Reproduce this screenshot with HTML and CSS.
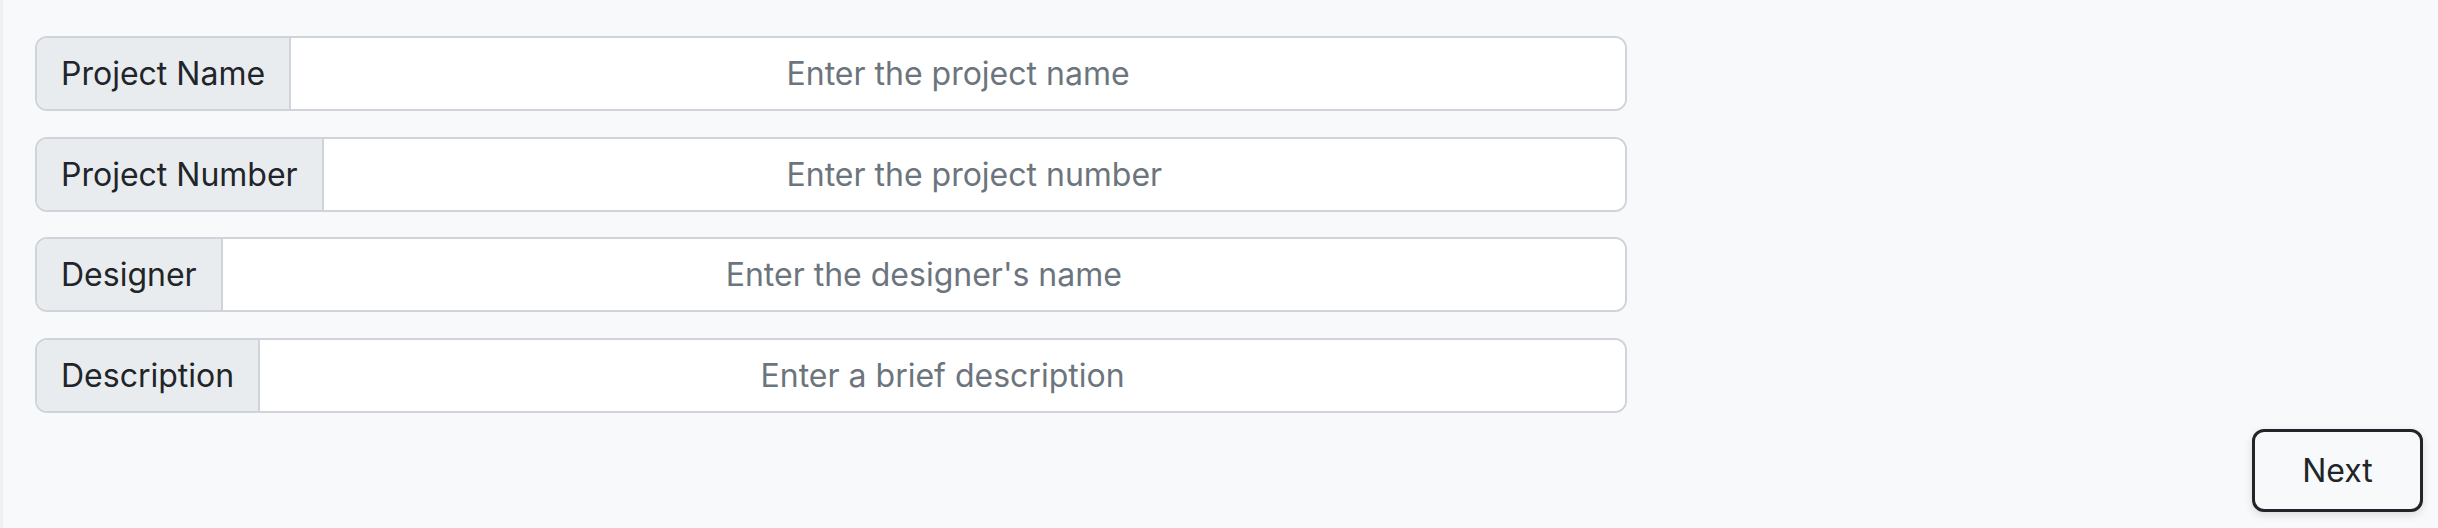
FILE: index.html
```html
<!DOCTYPE html>
<html lang="en">
<head>
<meta charset="utf-8">
<title>Project Details</title>
<link rel="stylesheet" href="styles.css">
</head>
<body>
<div class="page">
  <div class="edge"></div>
  <main class="content">
    <form class="form">
      <div class="input-group">
        <span class="label">Project Name</span>
        <input class="field" type="text" placeholder="Enter the project name">
      </div>
      <div class="input-group">
        <span class="label">Project Number</span>
        <input class="field" type="text" placeholder="Enter the project number">
      </div>
      <div class="input-group">
        <span class="label">Designer</span>
        <input class="field" type="text" placeholder="Enter the designer's name">
      </div>
      <div class="input-group">
        <span class="label">Description</span>
        <input class="field" type="text" placeholder="Enter a brief description">
      </div>
    </form>
    <div class="actions">
      <button class="btn-next" type="button">Next</button>
    </div>
  </main>
</div>
</body>
</html>
```
FILE: styles.css
```css
* { box-sizing: border-box; }
html, body { margin: 0; padding: 0; }
body {
  background: #f8f9fa;
  font-family: Inter, "Noto Sans", sans-serif;
  color: #212529;
  width: 2438px;
  height: 528px;
  overflow: hidden;
}
.page {
  display: flex;
  height: 528px;
}
.edge {
  width: 3px;
  flex: none;
  background: #eff0f1;
}
.content {
  flex: 1;
  display: flex;
  flex-direction: column;
  padding: 36px 15px 16px 32px;
}
.form {
  display: flex;
  flex-direction: column;
  gap: 25.3px;
  width: 1592px;
}
.input-group {
  display: flex;
  height: 75.3px;
  border: 2px solid #d0d4da;
  border-radius: 12px;
  overflow: hidden;
  background: #fff;
}
.label {
  display: flex;
  align-items: center;
  padding: 0 24px;
  background: #e9ecef;
  border-right: 2px solid #d0d4da;
  font-size: 32px;
  color: #212529;
  white-space: nowrap;
}
.field {
  flex: 1;
  border: 0;
  outline: 0;
  background: #fff;
  font-family: inherit;
  font-size: 32px;
  text-align: center;
  color: #212529;
  padding: 0 24px;
}
.field::placeholder { color: #6c757d; opacity: 1; }
.actions {
  margin-top: auto;
  display: flex;
  justify-content: flex-end;
}
.btn-next {
  width: 171px;
  height: 83px;
  border: 3px solid #212529;
  border-radius: 12px;
  background: #f8f9fa;
  font-family: inherit;
  font-size: 32px;
  color: #212529;
  box-shadow: 0 3px 8px rgba(0,0,0,0.12);
  padding: 0;
}
```
